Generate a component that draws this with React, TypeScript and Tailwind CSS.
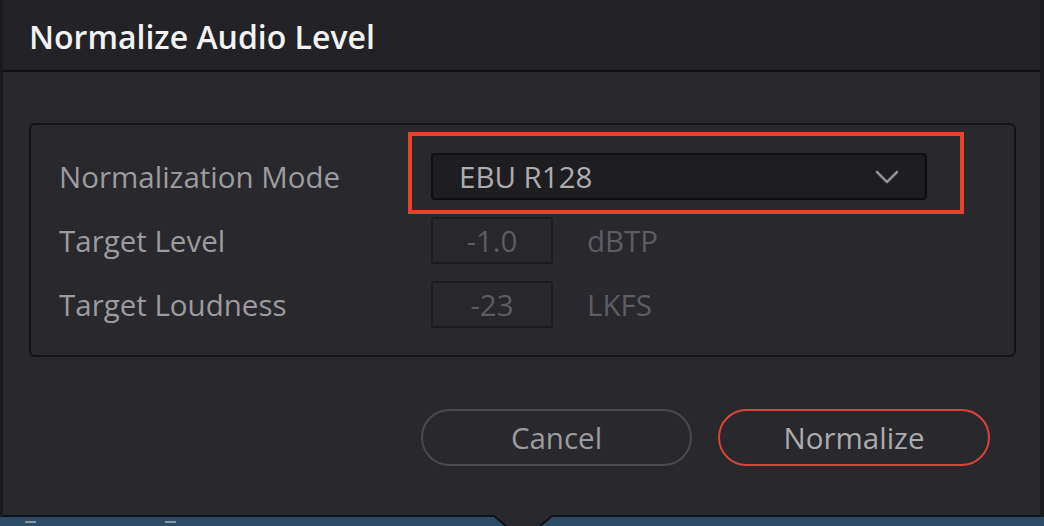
import React from 'react';

const font = { fontFamily: '"Open Sans", "Noto Sans", sans-serif' };

function Chevron() {
  return (
    <svg width="24" height="14" viewBox="0 0 24 14" fill="none">
      <path d="M2 2 L12 12 L22 2" stroke="#8e8e91" strokeWidth="2.6" strokeLinecap="round" strokeLinejoin="round" />
    </svg>
  );
}

function Row({ label, children }: { label: string; children: React.ReactNode }) {
  return (
    <div className="flex items-center h-[47px]">
      <div className="w-[372px] text-[29.5px] text-[#9c9c9f] leading-none">{label}</div>
      {children}
    </div>
  );
}

function NumberField({ value, unit }: { value: string; unit: string }) {
  return (
    <div className="flex items-center">
      <div className="w-[122px] h-[47px] rounded-[3px] border-2 border-[#1c1c20] bg-[#27272c] flex items-center justify-center text-[29.5px] text-[#5d5d62] leading-none">
        {value}
      </div>
      <span className="ml-[34px] text-[29.5px] text-[#5d5d62] leading-none">{unit}</span>
    </div>
  );
}

export default function App() {
  return (
    <div className="w-[1044px] h-[526px] bg-[#1b1b1f] relative overflow-hidden flex flex-col" style={font}>
      <div className="flex flex-1">
        <div className="w-[3px] bg-[#1a1a1d]" />
        <div className="w-[1037px] flex flex-col bg-[#28282d] border-b-2 border-[#101013]">
          {/* title bar */}
          <div className="h-[72px] flex items-center px-[26px] pt-[4px] bg-[#222227] border-b-2 border-[#111114]">
            <span className="text-[32px] font-semibold text-[#f2f2f2] leading-none">Normalize Audio Level</span>
          </div>

          {/* settings group */}
          <div className="mt-[51px] ml-[26px] w-[987px] h-[234px] rounded-[6px] border-2 border-[#121215] pt-[28px] pl-[28px] flex flex-col gap-[17px]">
            <Row label="Normalization Mode">
              <div className="relative">
                <div className="w-[496px] h-[47px] rounded-[4px] border-2 border-[#0f0f11] bg-[#1e1e21] flex items-center justify-between pl-[26px] pr-[26px]">
                  <span className="text-[29.5px] text-[#adadb0] leading-none">EBU R128</span>
                  <Chevron />
                </div>
                <div className="absolute top-[-21px] bottom-[-14px] left-[-23px] right-[-37px] border-[4px] border-[#e8432a]" />
              </div>
            </Row>
            <Row label="Target Level">
              <NumberField value="-1.0" unit="dBTP" />
            </Row>
            <Row label="Target Loudness">
              <NumberField value="-23" unit="LKFS" />
            </Row>
          </div>

          {/* buttons */}
          <div className="mt-[52px] flex justify-end gap-[26px] pr-[50px]">
            <button className="w-[271px] h-[57px] rounded-full border-2 border-[#4a4b51] text-[29.5px] text-[#9c9c9f] leading-none">
              Cancel
            </button>
            <button className="w-[272px] h-[57px] rounded-full border-2 border-[#d9443a] text-[29.5px] text-[#ababae] leading-none">
              Normalize
            </button>
          </div>
        </div>
        <div className="w-[4px] bg-[#1a1a1d]" />
      </div>

      {/* backdrop strip below the popover */}
      <div className="h-[9px] bg-[#2b4b67] flex items-center">
        <div className="ml-[25px] w-[11px] h-[2px] bg-[#8a98a6]" />
        <div className="ml-[129px] w-[11px] h-[2px] bg-[#8a98a6]" />
      </div>

      {/* popover arrow */}
      <svg className="absolute left-[494px] top-[515px]" width="58" height="11" viewBox="0 0 58 11">
        <path d="M0 0 L58 0 L46 11 L12 11 Z" fill="#28282d" />
        <path d="M0 1 L12 11 M58 1 L46 11" stroke="#101013" strokeWidth="2" />
      </svg>
    </div>
  );
}
